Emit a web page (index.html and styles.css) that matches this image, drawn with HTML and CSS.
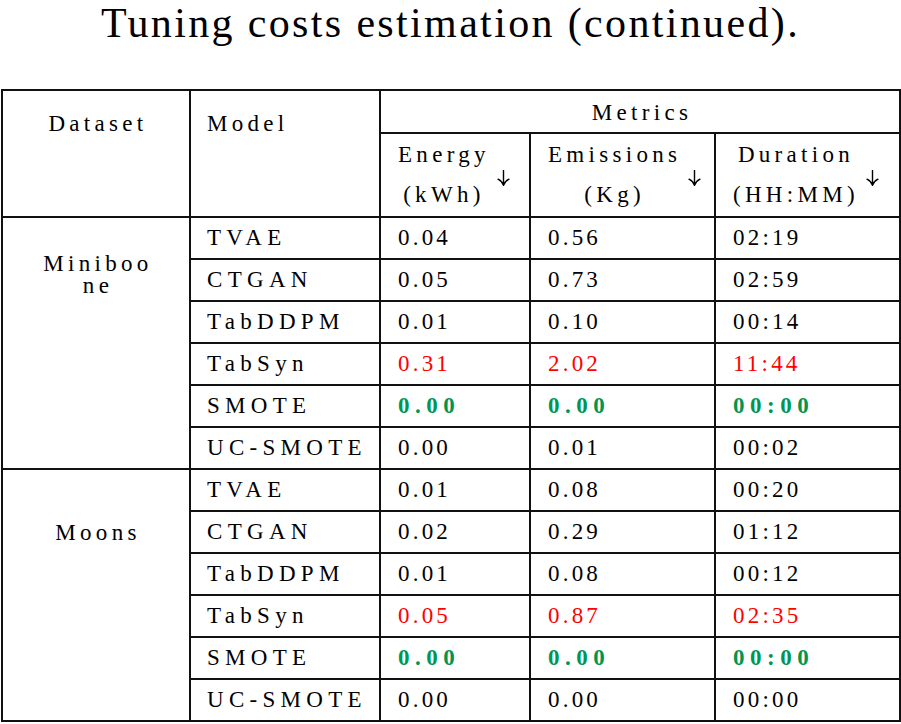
FILE: index.html
```html
<!DOCTYPE html>
<html lang="en">
<head>
<meta charset="utf-8">
<title>Tuning costs estimation (continued)</title>
<link rel="stylesheet" href="styles.css">
</head>
<body>
<h1 class="title">Tuning costs estimation (continued).</h1>
<table class="costs">
  <colgroup>
    <col class="col-dataset">
    <col class="col-model">
    <col class="col-energy">
    <col class="col-emissions">
    <col class="col-duration">
  </colgroup>
  <thead>
    <tr class="head-top">
      <th rowspan="2" class="hd-dataset">Dataset</th>
      <th rowspan="2" class="hd-model">Model</th>
      <th colspan="3" class="hd-metrics">Metrics</th>
    </tr>
    <tr class="head-sub">
      <th class="hd-metric">
        <div class="metric">
          <div class="metric-label">Energy<br>(kWh)</div>
          <svg class="arrow" viewBox="0 0 13 16" width="13" height="16"><path d="M6.5 0.5V15M1 9.2Q4.8 11 6.5 15.3Q8.2 11 12 9.2"/></svg>
        </div>
      </th>
      <th class="hd-metric">
        <div class="metric">
          <div class="metric-label">Emissions<br>(Kg)</div>
          <svg class="arrow" viewBox="0 0 13 16" width="13" height="16"><path d="M6.5 0.5V15M1 9.2Q4.8 11 6.5 15.3Q8.2 11 12 9.2"/></svg>
        </div>
      </th>
      <th class="hd-metric">
        <div class="metric">
          <div class="metric-label">Duration<br>(HH:MM)</div>
          <svg class="arrow" viewBox="0 0 13 16" width="13" height="16"><path d="M6.5 0.5V15M1 9.2Q4.8 11 6.5 15.3Q8.2 11 12 9.2"/></svg>
        </div>
      </th>
    </tr>
  </thead>
  <tbody class="group">
    <tr class="row">
      <td rowspan="6" class="ds ds-miniboone">Miniboo<br>ne</td>
      <td class="model">TVAE</td>
      <td class="num">0.04</td>
      <td class="num">0.56</td>
      <td class="num">02:19</td>
    </tr>
    <tr class="row">
      <td class="model">CTGAN</td>
      <td class="num">0.05</td>
      <td class="num">0.73</td>
      <td class="num">02:59</td>
    </tr>
    <tr class="row">
      <td class="model">TabDDPM</td>
      <td class="num">0.01</td>
      <td class="num">0.10</td>
      <td class="num">00:14</td>
    </tr>
    <tr class="row">
      <td class="model">TabSyn</td>
      <td class="num worst">0.31</td>
      <td class="num worst">2.02</td>
      <td class="num worst">11:44</td>
    </tr>
    <tr class="row">
      <td class="model">SMOTE</td>
      <td class="num best">0.00</td>
      <td class="num best">0.00</td>
      <td class="num best">00:00</td>
    </tr>
    <tr class="row">
      <td class="model">UC-SMOTE</td>
      <td class="num">0.00</td>
      <td class="num">0.01</td>
      <td class="num">00:02</td>
    </tr>
  </tbody>
  <tbody class="group">
    <tr class="row">
      <td rowspan="6" class="ds ds-moons">Moons</td>
      <td class="model">TVAE</td>
      <td class="num">0.01</td>
      <td class="num">0.08</td>
      <td class="num">00:20</td>
    </tr>
    <tr class="row">
      <td class="model">CTGAN</td>
      <td class="num">0.02</td>
      <td class="num">0.29</td>
      <td class="num">01:12</td>
    </tr>
    <tr class="row">
      <td class="model">TabDDPM</td>
      <td class="num">0.01</td>
      <td class="num">0.08</td>
      <td class="num">00:12</td>
    </tr>
    <tr class="row">
      <td class="model">TabSyn</td>
      <td class="num worst">0.05</td>
      <td class="num worst">0.87</td>
      <td class="num worst">02:35</td>
    </tr>
    <tr class="row">
      <td class="model">SMOTE</td>
      <td class="num best">0.00</td>
      <td class="num best">0.00</td>
      <td class="num best">00:00</td>
    </tr>
    <tr class="row">
      <td class="model">UC-SMOTE</td>
      <td class="num">0.00</td>
      <td class="num">0.00</td>
      <td class="num">00:00</td>
    </tr>
  </tbody>
</table>
</body>
</html>
```
FILE: styles.css
```css
body {
  margin: 0;
  background: #ffffff;
  color: #000000;
  font-family: "Liberation Serif", "Times New Roman", serif;
}

.title {
  margin: 0;
  font-size: 42px;
  line-height: 47px;
  font-weight: normal;
  text-align: center;
  letter-spacing: 2.35px;
}

.costs {
  margin: 42px 0 0 1px;
  width: 900px;
  table-layout: fixed;
  border-collapse: separate;
  border-spacing: 0;
  border-top: 2px solid #111;
  border-left: 2px solid #111;
  font-size: 23px;
  line-height: 22px;
}

.col-dataset { width: 188px; }
.col-model { width: 190px; }
.col-energy { width: 150px; }
.col-emissions { width: 185px; }
.col-duration { width: 185px; }

.costs th,
.costs td {
  padding: 0;
  border-right: 2px solid #111;
  border-bottom: 2px solid #111;
  font-weight: normal;
  text-align: left;
}

.head-top { height: 43px; }
.head-sub { height: 84px; }
.row { height: 42px; }

.costs .hd-dataset {
  vertical-align: top;
  text-align: center;
  padding: 22px 0 0 4px;
  letter-spacing: 4.3px;
}

.costs .hd-model {
  vertical-align: top;
  padding: 22px 0 0 16px;
  letter-spacing: 4.3px;
}

.costs .hd-metrics {
  text-align: center;
  vertical-align: middle;
  padding: 3px 0 0 4px;
  letter-spacing: 4.3px;
}

.costs .hd-metric {
  vertical-align: middle;
}

.metric {
  display: flex;
  align-items: center;
  gap: 7px;
  padding-left: 17px;
}

.metric-label {
  text-align: center;
  line-height: 40px;
  letter-spacing: 4.3px;
}

.arrow {
  margin-top: 6px;
  fill: none;
  stroke: #000;
  stroke-width: 1.4;
  stroke-linecap: round;
}

.costs .ds {
  vertical-align: top;
  text-align: center;
  line-height: 22px;
  letter-spacing: 4.3px;
  padding-left: 4px;
}

.costs .ds-miniboone { padding-top: 35px; }
.costs .ds-moons { padding-top: 52px; }

.costs td.model {
  vertical-align: middle;
  padding-left: 16px;
  letter-spacing: 5.3px;
}

.costs td.num {
  vertical-align: middle;
  padding-left: 17px;
  letter-spacing: 3.2px;
}

.costs td.worst {
  color: #ff0000;
}

.costs td.best {
  color: #00964f;
  font-weight: bold;
  letter-spacing: 5.5px;
}
```
